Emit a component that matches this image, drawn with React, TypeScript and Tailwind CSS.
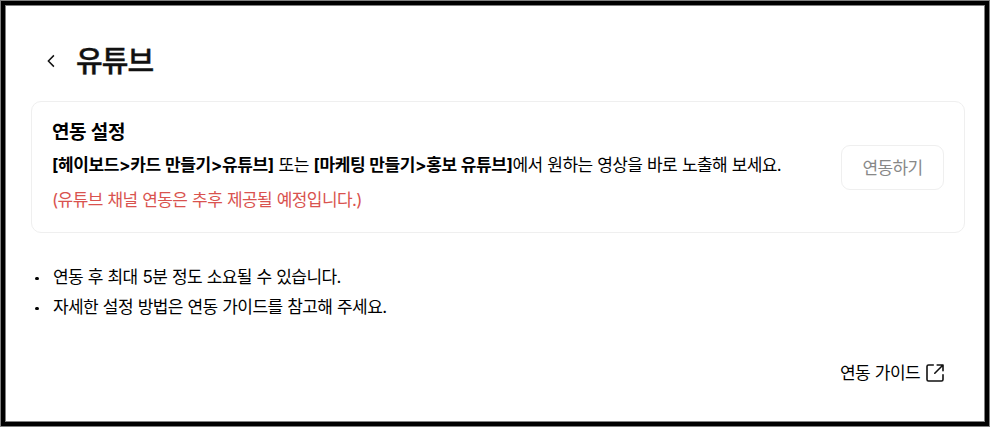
import { useState } from 'react';

const FONT = "font-[Inter,'Noto_Sans_CJK_KR',sans-serif]";

// Notas bajo la tarjeta
const notices = [
  { id: 1, text: '연동 후 최대 5분 정도 소요될 수 있습니다.' },
  { id: 2, text: '자세한 설정 방법은 연동 가이드를 참고해 주세요.' },
];

export default function App() {
  const [linked] = useState(false);

  return (
    <div className="h-[434px] w-[991px] overflow-hidden bg-white">
      {/* MARCO: negro con un filo gris a cada lado */}
      <div className="h-[427px] w-[990px] border border-[#808080] bg-black p-[4px]">
        <div className={`flex h-full flex-col border border-[#808080] bg-white pr-[19px] pl-[25px] whitespace-nowrap text-black [word-spacing:0.55px] ${FONT}`}>

          {/* HEADER */}
          <header className="mt-[35px] flex h-[40px] items-center">
            <button aria-label="뒤로" className="ml-[15px] w-[10px]">
              <svg width="10" height="14" viewBox="0 0 10 14" fill="none" stroke="#111" strokeWidth="1.5">
                <path d="M7.9 1.400 2.400 7l5.500 5.600" />
              </svg>
            </button>
            <h1 className="mt-[2px] ml-[20px] text-[29px] leading-[40px] font-medium tracking-[-0.9px] text-[#111] [-webkit-text-stroke:0.4px_#111]">유튜브</h1>
          </header>

          {/* CARD */}
          <section className="mt-[20px] flex h-[132px] shrink-0 items-center justify-between rounded-[10px] border border-[#efefef] px-[20px]">
            <div>
              <h2 className="pt-px text-[19px] leading-[30px] font-bold tracking-[-0.4px]">연동 설정</h2>
              <p className="-mt-px text-[17px] leading-[36px] tracking-[-0.6px]">
                <b className="font-bold tracking-[-0.37px]">[헤이보드&gt;카드 만들기&gt;유튜브]</b> 또는 <b className="font-bold tracking-[-0.4px]">[마케팅 만들기&gt;홍보 유튜브]</b>에서 원하는 영상을 바로 노출해 보세요.
              </p>
              <p className="text-[17px] leading-[34px] tracking-[-0.6px] text-[#d9534f]">(유튜브 채널 연동은 추후 제공될 예정입니다.)</p>
            </div>
            <button disabled={!linked} className="h-[45px] w-[103px] rounded-[9px] border border-[#efefef] pt-[3px] text-[17px] tracking-[-0.6px] text-[#888]">
              연동하기
            </button>
          </section>

          {/* NOTICES */}
          <ul className="mt-[29px]">
            {notices.map((n) => (
              <li key={n.id} className="flex h-[30px] items-center">
                <span className="mt-[3px] ml-[4px] h-[3.500px] w-[3.500px] rounded-full bg-black" />
                <span className="ml-[14.500px] text-[17px] leading-[30px] tracking-[-0.6px]">{n.text}</span>
              </li>
            ))}
          </ul>

          {/* GUIDE LINK */}
          <div className="mt-[36px] mr-[21px] flex h-[30px] items-center justify-end">
            <a className="text-[17px] leading-[30px] tracking-[-0.6px]">연동 가이드</a>
            <svg className="ml-[6px]" width="18" height="18" viewBox="0 0 18 18" fill="none" stroke="#111" strokeWidth="1.6" strokeLinecap="round" strokeLinejoin="round">
              <path d="M7.300 1H2.500A1.500 1.500 0 0 0 1 2.500v13A1.500 1.500 0 0 0 2.500 17h13a1.500 1.500 0 0 0 1.500-1.500v-4.800M11.200 1H17v5.800M17 1 8.800 9.200" />
            </svg>
          </div>
        </div>
      </div>
    </div>
  );
}
